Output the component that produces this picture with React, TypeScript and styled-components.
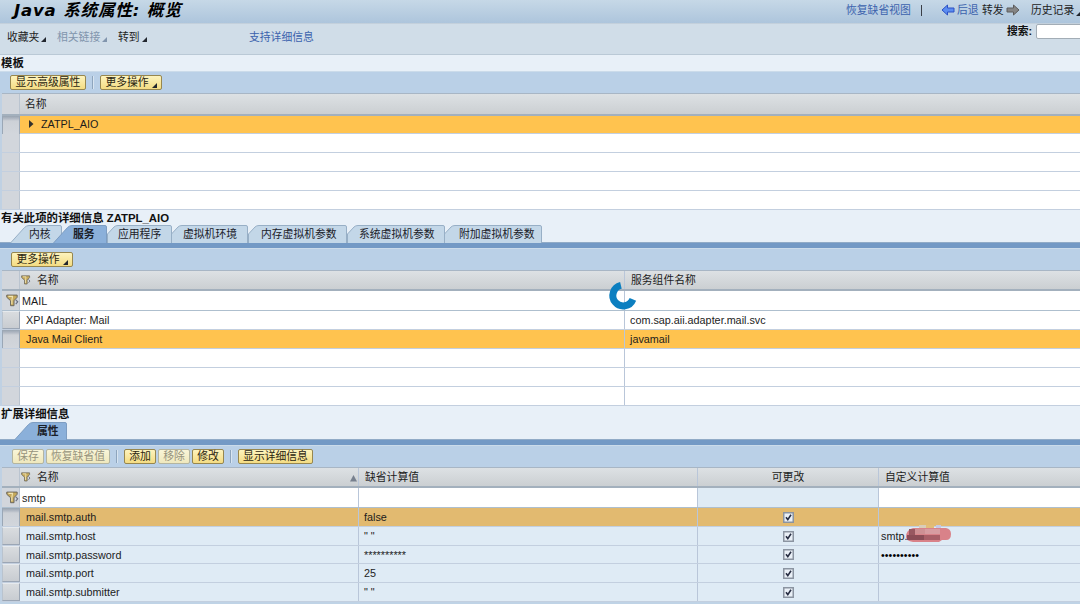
import React from "react";
import styled, { createGlobalStyle, css } from "styled-components";

const Global = createGlobalStyle`
  * { box-sizing: border-box; }
  html, body { margin: 0; padding: 0; }
  body {
    width: 1080px; height: 604px; overflow: hidden; background: #bfd3e6;
    font-family: "Liberation Sans", "Noto Sans CJK SC", sans-serif;
    font-size: 10.8px; color: #1c1c1c;
  }
`;

const Page = styled.div`
  width: 1080px; height: 604px; overflow: hidden; display: flex; flex-direction: column;
  white-space: nowrap;
`;
const TitleBar = styled.header`
  height: 24px; flex: none; display: flex; align-items: flex-start; padding-left: 14px;
  background: linear-gradient(#c6d8e7, #adc5dc); border-bottom: 1px solid #c3d0dc;
`;
const Title = styled.h1`
  margin: 0; flex: none; width: 832px; height: 22px; letter-spacing: 0.8px;
  font: italic bold 16.6px/21px "DejaVu Sans", "Noto Sans CJK SC", sans-serif; color: #000;
`;
const Nav = styled.div<{ $w: number; $link?: boolean }>`
  flex: none; width: ${(p) => p.$w}px; height: 20px; line-height: 18px; display: flex; align-items: center; gap: 2px;
  color: ${(p) => (p.$link ? "#3b62ad" : "#222")};
`;
const NavDivider = styled.span`
  flex: none; width: 1px; height: 11px; margin: 5px 19px 0 0; background: #3a3f47;
`;
const MenuBar = styled.nav`
  height: 31px; flex: none; display: flex; align-items: flex-start; padding-left: 7px;
  background: #d0dde8; border-bottom: 1px solid #bac9d6;
`;
const MenuItem = styled.div<{ $w: number; $color?: string }>`
  flex: none; width: ${(p) => p.$w}px; display: flex; gap: 2px; align-items: center; height: 24px;
  color: ${(p) => p.$color || "#222"};
`;
const SearchLabel = styled.label`
  flex: none; width: 29px; font-weight: bold; line-height: 15px; color: #111;
`;
const SearchInput = styled.input`
  flex: none; width: 60px; height: 15px; border: 1px solid #a3adb6; border-radius: 2px; background: #fff; padding: 0;
`;
const SectionTitle = styled.h2<{ $h: number }>`
  margin: 0; flex: none; height: ${(p) => p.$h}px; line-height: 16px; font-size: 11.4px; font-weight: bold;
  padding-left: 1px; color: #111; background: #e8f0f8;
`;
const Toolbar = styled.div<{ $h: number; $pad: number }>`
  height: ${(p) => p.$h}px; flex: none; display: flex; align-items: center;
  padding-left: ${(p) => p.$pad}px; background: #bad0e7; border-top: 1px solid #cbdbea;
`;
const Button = styled.button<{ $w: number; $off?: boolean; $gap?: number }>`
  width: ${(p) => p.$w}px; height: 15px; flex: none; margin: 0 ${(p) => p.$gap || 0}px 0 0; padding: 0;
  display: flex; align-items: center; justify-content: center; gap: 3px;
  font: inherit; line-height: 13px; border-radius: 2px; border: 1px solid #97874f;
  color: #2a2510; background: linear-gradient(#fdf3bd, #f4dc83);
  ${(p) => p.$off && css`color: #96937c; background: linear-gradient(#f9f5d8, #efe8bd); border-color: #b4b5a0;`}
`;
const Separator = styled.span<{ $gap: number }>`
  width: 2px; height: 13px; background: #8ea5bd; border-right: 1px solid #d8e5f1; margin-right: ${(p) => p.$gap}px;
`;
const Grid = styled.div`
  flex: none; display: flex; flex-direction: column; padding-left: 2px;
  background: #c0d1e3;
`;
const Row = styled.div<{ $cols: string; $h: number; $bg?: string; $line?: string }>`
  display: grid; grid-template-columns: ${(p) => p.$cols}; height: ${(p) => p.$h}px;
  background: ${(p) => p.$bg || "#fff"}; border-bottom: 1px solid ${(p) => p.$line || "#c3cfdf"};
`;
const HeadRow = styled(Row)`
  background: linear-gradient(#dde1e4, #cbcfd2); border-top: 1px solid #a8b6c5; border-bottom: 2px solid #a3b0bd;
`;
const Cell = styled.div<{ $pad?: number; $bg?: string; $center?: boolean; $last?: boolean; $lift?: number }>`
  position: relative; display: flex; align-items: center; min-width: 0;
  padding-left: ${(p) => p.$pad ?? 5}px; padding-bottom: ${(p) => p.$lift || 0}px;
  justify-content: ${(p) => (p.$center ? "center" : "flex-start")};
  background: ${(p) => p.$bg || "none"}; line-height: 16px;
  border-right: ${(p) => (p.$last ? "0" : "1px solid #b9c6d9")};
`;
const Gutter = styled.div<{ $kind?: "plain" | "raised" | "pressed" }>`
  background: #d2d6dc; border-right: 1px solid #bac4d0; display: flex; align-items: center; justify-content: flex-end;
  ${(p) => p.$kind === "raised" && css`
    background: linear-gradient(#d9dcdf, #c8ccd1); border: 1px solid #9ba6b5; border-top-color: #e6eaee;
    border-left-color: #b9c3ce;`}
  ${(p) => p.$kind === "pressed" && css`
    border: 1px solid #9aa7b6; border-width: 0 1px;
    background: linear-gradient(#98a3b0, #b5bcc6 3px, #cdd1d7 5px, #d2d6dc);`}
`;
const FilterSlot = styled.span<{ $gap: number }>`
  display: flex; margin-right: ${(p) => p.$gap}px;
`;
const SortSlot = styled.span`
  margin-left: auto; margin-right: 1px; display: flex; padding-top: 2px;
`;
const TabStrip = styled.div<{ $pad: number }>`
  flex: none; height: 23px; padding-left: ${(p) => p.$pad}px; display: flex; background: #e8f0f8;
  border-bottom: 5px solid #7399c5; box-shadow: inset 0 -1px #91abc7;
`;
const TabBox = styled.div<{ $w: number; $overlap?: number; $active?: boolean; $text: number }>`
  position: relative; flex: none; width: ${(p) => p.$w}px; height: 18px; margin-left: ${(p) => -(p.$overlap || 0)}px;
  padding-left: ${(p) => p.$text}px; line-height: 19px; z-index: ${(p) => (p.$active ? 1 : 0)};
  font-weight: ${(p) => (p.$active ? "bold" : "normal")}; color: #1a2029;
`;
const TabShape = styled.svg`
  position: absolute; left: 0; top: 0; z-index: -1;
`;
const TabText = styled.span`position: relative;`;
const Spinner = styled.svg`
  position: absolute; left: 607px; top: 279px; z-index: 5;
`;
const Smudge = styled.svg`
  position: absolute; left: 25px; top: -2px;
`;
const Dots = styled.span`letter-spacing: 0.1px; font-size: 10.6px; color: #000;`;
const CornerSlot = styled.span<{ $drop: number }>`
  display: flex; padding-top: ${(p) => p.$drop}px;
`;

const Corner = ({ c = "#22262e", drop = 7 }: { c?: string; drop?: number }) => (
  <CornerSlot $drop={drop}>
    <svg width="5" height="5"><path d="M5 0V5H0Z" fill={c} /></svg>
  </CornerSlot>
);

const Arrow = ({ right }: { right?: boolean }) => (
  <svg width="14" height="12" viewBox="0 0 14 12">
    <path
      d={right ? "M13 6L7.5 1V4H1V8H7.5V11Z" : "M1 6L6.5 1V4H13V8H6.5V11Z"}
      fill={right ? "#858585" : "#5b8cf0"} stroke={right ? "#5c5c5c" : "#2c51c4"} strokeLinejoin="round"
    />
  </svg>
);

const Filter = ({ size }: { size: number }) => (
  <svg width={size} height={size} viewBox="0 0 12 12">
    <path d="M.7 1H10.3V3L7.4 6.2V10.8H4.2V6.2L.7 3Z" fill="#c5a95b" stroke="#6a665e" strokeWidth=".9" />
    <path d="M2.2 2.2H6L5.4 6V9.5" fill="none" stroke="#f2e5b5" strokeWidth="1" />
    <path d="M9 5.400L10.800 7.200L9 9.300" fill="none" stroke="#6a7082" strokeWidth="1.1" />
  </svg>
);

const Check = () => (
  <svg width="11" height="11">
    <rect x=".75" y=".75" width="9.5" height="9.5" fill="#eaf0f7" stroke="#8b94a1" strokeWidth="1.5" />
    <path d="M3 5.2L4.8 7.6L8 2.8" fill="none" stroke="#272d42" strokeWidth="1.6" />
  </svg>
);

type TabProps = { w: number; text: number; label: string; active?: boolean; overlap?: number; slant?: boolean };
const Tab = ({ w, text, label, active, overlap, slant }: TabProps) => {
  const d = slant
    ? `M0.5 18L14.500 2.500Q16.500 .5 19 .5H${w - 2}Q${w - 0.5} .5 ${w - 0.5} 2V18`
    : `M.5 18V9L7 2Q8.500 .5 11 .5H${w - 2}Q${w - 0.5} .5 ${w - 0.5} 2V18`;
  return (
    <TabBox $w={w} $text={text} $active={active} $overlap={overlap}>
      <TabShape width={w} height="18">
        <path d={d} fill={active ? "#8bb0da" : "#c3d7e8"} stroke={active ? "#7d9dc2" : "#97afc6"} />
      </TabShape>
      <TabText>{label}</TabText>
    </TabBox>
  );
};

const templateCols = "18px 1fr";
const serviceCols = "18px 605px 1fr";
const propCols = "18px 339px 339px 181px 1fr";
const pale = "#dfebf5";

const properties = [
  { name: "mail.smtp.auth", value: "false" },
  { name: "mail.smtp.host", value: '" "', custom: "host" },
  { name: "mail.smtp.password", value: "**********", custom: "dots" },
  { name: "mail.smtp.port", value: "25" },
  { name: "mail.smtp.submitter", value: '" "' },
];

const Redaction = () => (
  <Smudge width="50" height="19">
    <rect x="15" y="0" width="7" height="4" fill="#d9cdb9" />
    <rect x="22" y="0" width="8" height="4" fill="#e2bd78" />
    <rect x="32" y="0" width="5" height="4" fill="#c5c9e4" />
    <path d="M9 3H42Q47 4 47 9Q47 15 42 15H38L35 17H9Q2 16 2 12Q2 5 9 3Z" fill="#d98289" />
    <rect x="5" y="4" width="6" height="6" fill="#985861" />
    <rect x="11" y="4" width="10" height="5" fill="#ce9094" />
    <rect x="21" y="4" width="15" height="5" fill="#d79ca1" />
    <rect x="3" y="10" width="17" height="5" fill="#8b4d57" />
    <rect x="20" y="10" width="16" height="5" fill="#a95f68" />
  </Smudge>
);

export default function App() {
  return (
    <>
      <Global />
      <Page>
        <TitleBar>
          <Title>Java 系统属性: 概览</Title>
          <Nav $w={75} $link>恢复缺省视图</Nav>
          <NavDivider />
          <Nav $w={41} $link><Arrow />后退</Nav>
          <Nav $w={49}>转发<Arrow right /></Nav>
          <Nav $w={60}>历史记录<Corner /></Nav>
        </TitleBar>
        <MenuBar>
          <MenuItem $w={50}>收藏夹<Corner /></MenuItem>
          <MenuItem $w={61} $color="#8195ad">相关链接<Corner c="#8195ad" /></MenuItem>
          <MenuItem $w={131}>转到<Corner /></MenuItem>
          <MenuItem $w={758} $color="#3b62ad">支持详细信息</MenuItem>
          <SearchLabel>搜索:</SearchLabel>
          <SearchInput />
        </MenuBar>

        <SectionTitle $h={16}>模板</SectionTitle>
        <Toolbar $h={22} $pad={10}>
          <Button $w={76} $gap={6}>显示高级属性</Button>
          <Separator $gap={6} />
          <Button $w={62}>更多操作<Corner drop={5} /></Button>
        </Toolbar>
        <Grid>
          <HeadRow $cols={templateCols} $h={23}>
            <Gutter />
            <Cell $last>名称</Cell>
          </HeadRow>
          <Row $cols={templateCols} $h={18} $bg="#ffc34f">
            <Gutter $kind="pressed" />
            <Cell $pad={9} $last $lift={2}>
              <svg width="5" height="8"><path d="M0 0L4.500 4L0 8Z" fill="#33322c" /></svg>
              <FilterSlot $gap={7} />ZATPL_AIO
            </Cell>
          </Row>
          {[0, 1, 2, 3].map((i) => (
            <Row key={i} $cols={templateCols} $h={19}><Gutter /><Cell $last /></Row>
          ))}
        </Grid>

        <SectionTitle $h={15}>有关此项的详细信息 ZATPL_AIO</SectionTitle>
        <TabStrip $pad={10}>
          <Tab w={52} text={19} label="内核" slant />
          <Tab w={54} text={20} label="服务" slant active overlap={9} />
          <Tab w={65} text={11} label="应用程序" />
          <Tab w={77} text={12} label="虚拟机环境" overlap={1} />
          <Tab w={99} text={13} label="内存虚拟机参数" />
          <Tab w={98} text={12} label="系统虚拟机参数" />
          <Tab w={98} text={15} label="附加虚拟机参数" overlap={1} />
        </TabStrip>
        <Toolbar $h={22} $pad={11}>
          <Button $w={62}>更多操作<Corner drop={5} /></Button>
        </Toolbar>
        <Grid>
          <HeadRow $cols={serviceCols} $h={21}>
            <Gutter />
            <Cell $pad={1}><FilterSlot $gap={6}><Filter size={10} /></FilterSlot>名称</Cell>
            <Cell $pad={6} $last>服务组件名称</Cell>
          </HeadRow>
          <Row $cols={serviceCols} $h={20} $line="#aebfce">
            <Gutter><Filter size={13} /></Gutter>
            <Cell $pad={2}>MAIL</Cell>
            <Cell $last />
          </Row>
          <Row $cols={serviceCols} $h={19}>
            <Gutter $kind="raised" />
            <Cell $pad={6}>XPI Adapter: Mail</Cell>
            <Cell $last>com.sap.aii.adapter.mail.svc</Cell>
          </Row>
          <Row $cols={serviceCols} $h={19} $bg="#ffc34f">
            <Gutter $kind="pressed" />
            <Cell $pad={6}>Java Mail Client</Cell>
            <Cell $last>javamail</Cell>
          </Row>
          {[0, 1, 2].map((i) => (
            <Row key={i} $cols={serviceCols} $h={19}><Gutter /><Cell /><Cell $last /></Row>
          ))}
        </Grid>

        <SectionTitle $h={16}>扩展详细信息</SectionTitle>
        <TabStrip $pad={14}>
          <Tab w={53} text={23} label="属性" slant active />
        </TabStrip>
        <Toolbar $h={22} $pad={12}>
          <Button $w={32} $gap={2} $off>保存</Button>
          <Button $w={64} $gap={6} $off>恢复缺省值</Button>
          <Separator $gap={6} />
          <Button $w={32} $gap={2}>添加</Button>
          <Button $w={32} $gap={2} $off>移除</Button>
          <Button $w={32} $gap={6}>修改</Button>
          <Separator $gap={6} />
          <Button $w={75}>显示详细信息</Button>
        </Toolbar>
        <Grid>
          <HeadRow $cols={propCols} $h={21}>
            <Gutter />
            <Cell $pad={1}>
              <FilterSlot $gap={6}><Filter size={10} /></FilterSlot>名称
              <SortSlot><svg width="7" height="7"><path d="M3.500 0L7 6.500H0Z" fill="#77808e" /></svg></SortSlot>
            </Cell>
            <Cell $pad={6}>缺省计算值</Cell>
            <Cell $center $pad={0}>可更改</Cell>
            <Cell $pad={6} $last>自定义计算值</Cell>
          </HeadRow>
          <Row $cols={propCols} $h={20} $line="#aebfce">
            <Gutter><Filter size={13} /></Gutter>
            <Cell $pad={2}>smtp</Cell>
            <Cell />
            <Cell $bg={pale} />
            <Cell $last />
          </Row>
          {properties.map((p, i) => (
            <Row key={p.name} $cols={propCols} $h={i === 2 ? 18 : 19} $bg={i === 0 ? "#e2ba70" : pale}>
              <Gutter $kind={i === 0 ? "pressed" : "raised"} />
              <Cell $pad={6}>{p.name}</Cell>
              <Cell>{p.value}</Cell>
              <Cell $center $pad={0}><Check /></Cell>
              <Cell $pad={2} $last>
                {p.custom === "host" && <>smtp.<Redaction /></>}
                {p.custom === "dots" && <Dots>••••••••••</Dots>}
              </Cell>
            </Row>
          ))}
        </Grid>
        <Spinner width="34" height="34">
          <path d="M13.900 6.400A10.400 10.400 0 1 0 25.900 20.400" fill="none" stroke="#0c7fc0" strokeWidth="7" />
        </Spinner>
      </Page>
    </>
  );
}
